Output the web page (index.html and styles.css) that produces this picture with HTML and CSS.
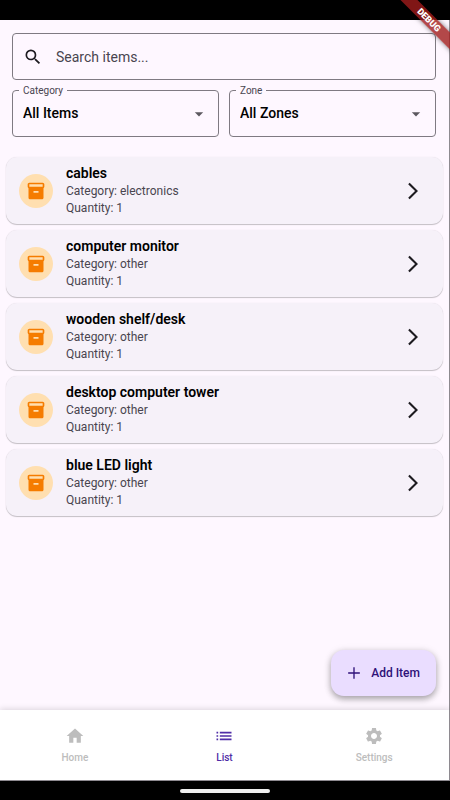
FILE: index.html
```html
<!DOCTYPE html>
<html lang="en">
<head>
<meta charset="utf-8">
<meta name="viewport" content="width=device-width, initial-scale=1">
<title>Items</title>
<link rel="stylesheet" href="styles.css">
</head>
<body>
<svg class="sprite" aria-hidden="true">
  <symbol id="archive" viewBox="0 0 24 24"><path fill="#ffdfb0" d="M4 4h16v3H4z"/><path d="M20 2H4c-1 0-2 .9-2 2v3.010c0 .72.430 1.340 1 1.690V20c0 1.100 1.100 2 2 2h14c.9 0 2-.9 2-2V8.700c.57-.35 1-.97 1-1.690V4c0-1.100-1-2-2-2zm-5 12H9v-2h6v2zm5-7H4V4h16v3z"/></symbol>
  <symbol id="chevron" viewBox="0 0 24 24"><path d="M6.230 20.230 8 22l10-10L8 2 6.230 3.770 14.460 12z"/></symbol>
  <symbol id="caret" viewBox="0 0 24 24"><path d="M7 10l5 5 5-5z"/></symbol>
</svg>
<div class="status-bar"></div>
<div class="ribbon"><span>DEBUG</span></div>
<main>
  <form class="filters">
    <div class="search">
      <label for="search"><svg viewBox="0 0 24 24" role="img" aria-label="Search"><path d="M15.500 14h-.79l-.28-.27A6.471 6.471 0 0 0 16 9.500 6.500 6.500 0 1 0 9.500 16c1.610 0 3.090-.59 4.230-1.570l.27.28v.79l5 4.990L20.490 19l-4.990-5zm-6 0C7.010 14 5 11.990 5 9.500S7.010 5 9.500 5 14 7.010 14 9.500 11.990 14 9.500 14z"/></svg></label>
      <input id="search" type="text" placeholder="Search items...">
    </div>
    <div class="field">
      <label for="category">Category</label>
      <select id="category"><option>All Items</option></select>
      <svg><use href="#caret"/></svg>
    </div>
    <div class="field">
      <label for="zone">Zone</label>
      <select id="zone"><option>All Zones</option></select>
      <svg><use href="#caret"/></svg>
    </div>
  </form>
  <ul class="items">
    <li><span class="avatar"><svg><use href="#archive"/></svg></span><div class="info"><h2>cables</h2><p>Category: electronics</p><p>Quantity: 1</p></div><svg class="chevron"><use href="#chevron"/></svg></li>
    <li><span class="avatar"><svg><use href="#archive"/></svg></span><div class="info"><h2>computer monitor</h2><p>Category: other</p><p>Quantity: 1</p></div><svg class="chevron"><use href="#chevron"/></svg></li>
    <li><span class="avatar"><svg><use href="#archive"/></svg></span><div class="info"><h2>wooden shelf/desk</h2><p>Category: other</p><p>Quantity: 1</p></div><svg class="chevron"><use href="#chevron"/></svg></li>
    <li><span class="avatar"><svg><use href="#archive"/></svg></span><div class="info"><h2>desktop computer tower</h2><p>Category: other</p><p>Quantity: 1</p></div><svg class="chevron"><use href="#chevron"/></svg></li>
    <li><span class="avatar"><svg><use href="#archive"/></svg></span><div class="info"><h2>blue LED light</h2><p>Category: other</p><p>Quantity: 1</p></div><svg class="chevron"><use href="#chevron"/></svg></li>
  </ul>
  <button class="fab" type="button"><svg viewBox="0 0 24 24"><path d="M19 12.800h-6.200V19h-1.600v-6.200H5v-1.600h6.200V5h1.600v6.200H19z"/></svg>Add Item</button>
</main>
<nav>
  <a href="#home"><svg viewBox="0 0 24 24"><path d="M10 20v-6h4v6h5v-8h3L12 3 2 12h3v8z"/></svg>Home</a>
  <a class="active" href="#list" aria-current="page"><svg viewBox="0 0 24 24"><path d="M3 13h2v-2H3v2zm0 4h2v-2H3v2zm0-8h2V7H3v2zm4 4h14v-2H7v2zm0 4h14v-2H7v2zM7 7v2h14V7H7z"/></svg>List</a>
  <a href="#settings"><svg viewBox="0 0 24 24"><path d="M19.140 12.940c.04-.3.060-.61.060-.94 0-.32-.02-.64-.07-.94l2.030-1.580c.18-.14.230-.41.120-.61l-1.920-3.320c-.12-.22-.37-.29-.59-.22l-2.390.96c-.5-.38-1.030-.7-1.620-.94l-.36-2.540c-.04-.24-.24-.41-.48-.41h-3.840c-.24 0-.43.170-.47.410l-.36 2.540c-.59.240-1.130.570-1.620.940l-2.390-.96c-.22-.08-.47 0-.59.220L2.740 8.870c-.12.210-.08.470.120.610l2.030 1.580c-.05.300-.09.630-.09.940s.02.640.070.940l-2.030 1.580c-.18.140-.23.410-.12.610l1.920 3.320c.12.220.37.290.59.220l2.390-.96c.5.380 1.030.7 1.620.940l.36 2.540c.05.240.24.410.48.410h3.840c.24 0 .44-.17.470-.41l.36-2.540c.59-.24 1.130-.56 1.620-.94l2.390.96c.22.080.47 0 .59-.22l1.920-3.320c.12-.22.070-.47-.12-.61l-2.010-1.580zM12 15.600c-1.980 0-3.600-1.620-3.600-3.600s1.620-3.600 3.600-3.600 3.600 1.620 3.600 3.600-1.620 3.600-3.600 3.600z"/></svg>Settings</a>
</nav>
<div class="system-bar"><span></span></div>
</body>
</html>
```
FILE: styles.css
```css
* { box-sizing: border-box; }

body {
  margin: 0;
  min-height: 100vh;
  display: flex;
  flex-direction: column;
  position: relative;
  overflow-x: hidden;
  background: #fef7ff;
  color: #000;
  font-family: Roboto, "Liberation Sans", sans-serif;
}

svg { fill: currentColor; flex: none; }
.sprite { position: absolute; width: 0; height: 0; }

.status-bar { height: 20px; background: #000; }

.ribbon {
  position: absolute;
  z-index: 1;
  top: 0;
  right: 0;
  width: 60px;
  height: 60px;
  overflow: hidden;
  pointer-events: none;
}
.ribbon span {
  position: absolute;
  top: 14px;
  right: -31px;
  width: 104px;
  line-height: 12px;
  text-align: center;
  transform: rotate(45deg);
  background: rgba(160, 28, 28, 0.8);
  box-shadow: 0 0 5px rgba(0, 0, 0, 0.5);
  color: #fff;
  font-size: 9px;
  font-weight: 900;
}

main {
  flex: 1;
  position: relative;
  padding: 13px 6px;
  border-right: 1px solid #8e8a90;
}

.filters {
  display: grid;
  grid-template-columns: 1fr 1fr;
  gap: 10px;
  padding: 0 7px 0 6px;
}
.search {
  grid-column: 1 / -1;
  display: flex;
  align-items: center;
  height: 47px;
  padding: 0 10px;
  gap: 13px;
  border: 1px solid #7f7a82;
  border-radius: 4px;
  color: #1d1b20;
}
.search svg { display: block; width: 20px; height: 20px; }
.search input {
  flex: 1;
  min-width: 0;
  padding: 0;
  border: 0;
  outline: 0;
  background: none;
  font: 14px/20px Roboto, sans-serif;
}
.search input::placeholder { color: #49454f; opacity: 1; }

.field { position: relative; }
.field label {
  position: absolute;
  top: -5px;
  left: 7px;
  padding: 0 4px;
  background: #fef7ff;
  color: #49454f;
  font-size: 10px;
  line-height: 12px;
}
.field select {
  appearance: none;
  display: block;
  width: 100%;
  height: 47px;
  padding: 0 32px 1px 10px;
  border: 1px solid #7f7a82;
  border-radius: 4px;
  background: none;
  color: #000;
  font: 500 14px/20px Roboto, sans-serif;
}
.field svg {
  position: absolute;
  top: 14px;
  right: 10px;
  width: 20px;
  height: 20px;
  color: #5c585f;
  pointer-events: none;
}

.items {
  display: grid;
  gap: 6px;
  margin: 20px 0 0;
  padding: 0;
  list-style: none;
}
.items li {
  display: flex;
  align-items: center;
  gap: 13px;
  padding: 7px 20px 7px 13px;
  border-radius: 11px;
  background: #f6f1f9;
  box-shadow: 0 1px 1px rgba(0, 0, 0, 0.22), 0 0 1px rgba(0, 0, 0, 0.12);
}
.avatar {
  display: grid;
  place-items: center;
  width: 34px;
  height: 34px;
  border-radius: 50%;
  background: #ffdfb0;
  color: #f57c00;
}
.avatar svg { width: 20px; height: 20px; }
.info { flex: 1; }
.info h2 { margin: 0; font-size: 14px; line-height: 19px; font-weight: 600; }
.info p { margin: 0; color: #49454f; font-size: 12px; line-height: 17px; }
.chevron { width: 20px; height: 20px; color: #1d1b20; }

.fab {
  position: absolute;
  right: 13px;
  bottom: 14px;
  display: flex;
  align-items: center;
  gap: 7px;
  height: 46px;
  padding: 0 16px 0 13px;
  border: 0;
  border-radius: 13px;
  background: #eaddff;
  box-shadow: 0 3px 6px rgba(0, 0, 0, 0.3), 0 1px 8px rgba(0, 0, 0, 0.1);
  color: #2f1179;
  font: 500 12px/20px Roboto, sans-serif;
}
.fab svg { width: 20px; height: 20px; }

nav {
  position: relative;
  display: grid;
  grid-template-columns: repeat(3, 1fr);
  padding: 16px 0;
  background: #fff;
  border-right: 1px solid #8e8a90;
  border-bottom: 1px solid #8e8a90;
  box-shadow: 0 -1px 6px rgba(0, 0, 0, 0.14);
}
nav a {
  display: flex;
  flex-direction: column;
  align-items: center;
  gap: 5px;
  color: #bdbdbd;
  font-size: 10px;
  line-height: 13px;
  font-weight: 500;
  text-decoration: none;
}
nav svg { width: 20px; height: 20px; }
nav .active { color: #4f2da7; }

.system-bar {
  display: grid;
  place-items: center;
  height: 19px;
  position: relative;
  background: #000;
}
.system-bar span { width: 90px; height: 4px; border-radius: 2px; background: #eee; }
```
